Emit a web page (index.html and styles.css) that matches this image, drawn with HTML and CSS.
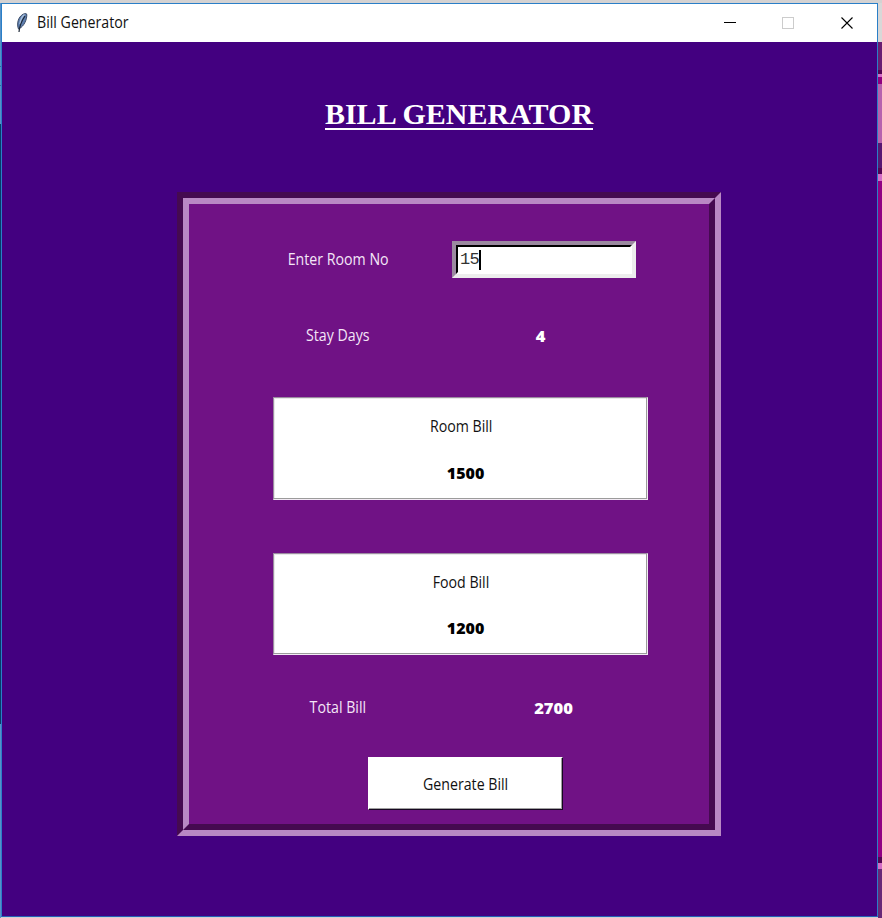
FILE: index.html
```html
<!DOCTYPE html>
<html lang="en">
<head>
<meta charset="utf-8">
<title>Bill Generator</title>
<link rel="stylesheet" href="styles.css">
</head>
<body>
<div class="desktop">
  <div class="edge-left"></div>
  <main class="window">
    <header class="titlebar">
      <svg class="feather" width="14" height="22" viewBox="0 0 14 22">
        <path d="M3.500 17C1.500 12 3 5 8 2.300C10 1.200 12 1.200 11.800 3C11.800 8 9 14 4.500 16.500Z" fill="#5f80b0" stroke="#3b4b66" stroke-width="1"/>
        <path d="M5 12C5.500 8 7 4.500 9.500 2.500" fill="none" stroke="#a9c0de" stroke-width="1.500"/>
        <path d="M4 20C4.500 14 6.500 9 10 4" fill="none" stroke="#1c2736" stroke-width="1.200"/>
      </svg>
      <span class="title"><span class="fit fit-title">Bill Generator</span></span>
      <svg class="controls" width="130" height="14" viewBox="0 0 130 14" fill="none" shape-rendering="crispEdges">
        <path d="M0 6.500H12" stroke="#000"/>
        <rect x="58.500" y="1.500" width="11" height="11" stroke="#ccc"/>
        <path d="M117.500 1.500L128.500 12.500M128.500 1.500L117.500 12.500" stroke="#000" stroke-width="1.100" shape-rendering="auto"/>
      </svg>
    </header>
    <h1 class="heading"><span>BILL GENERATOR</span></h1>
    <section class="groove">
      <div class="panel">
        <div class="row row-room">
          <label class="label"><span class="fit">Enter Room No</span></label>
          <div class="entry"><div class="entry-inner"><span class="digits">15</span><span class="caret"></span></div></div>
        </div>
        <div class="row row-days">
          <span class="label"><span class="fit">Stay Days</span></span>
          <strong class="value">4</strong>
        </div>
        <div class="box">
          <span class="box-name"><span class="fit">Room Bill</span></span>
          <strong class="box-value">1500</strong>
        </div>
        <div class="box box-food">
          <span class="box-name"><span class="fit">Food Bill</span></span>
          <strong class="box-value">1200</strong>
        </div>
        <div class="row row-total">
          <span class="label"><span class="fit">Total Bill</span></span>
          <strong class="value">2700</strong>
        </div>
        <button class="generate"><span class="fit">Generate Bill</span></button>
      </div>
    </section>
  </main>
  <div class="edge-right"></div>
</div>
</body>
</html>
```
FILE: styles.css
```css
* { box-sizing: border-box; }
body {
  margin: 0;
  background: #d4d2d2;
  font-family: "Open Sans", "Noto Sans", sans-serif;
  font-size: 15.5px;
  line-height: 20px;
}
.desktop {
  display: grid;
  grid-template-columns: 1px 877px 4px;
  width: 882px;
  height: 918px;
  padding-top: 3px;
  overflow: hidden;
}
.edge-left {
  background: linear-gradient(#5791c8 0 63px, #31679d 63px 64px, #5791c8 64px 82px, #31679d 82px 83px, #5791c8 83px 121px, #063a69 121px 721px, #5791c8 721px);
}
.edge-right {
  background: linear-gradient(#d8d8d8 0 39px, #691c73 39px 67px, #540454 67px 71px, #d36dc7 71px 74px, #91007f 74px 81px, #b661ae 81px 140px, #571773 140px 165px, #540454 165px 171px, #d36dc7 171px 178px, #910083 178px 854px, #540454 854px 860px, #d36dc7 860px 866px, #682777 866px);
}
.window {
  height: 914px;
  border: 1px solid #2a7fc8;
  border-bottom-color: #2460b8;
  background: #430080;
}
.titlebar {
  display: flex;
  align-items: center;
  height: 38px;
  padding: 0 23px 0 13px;
  background: #fff;
}
.feather { flex: none; margin-bottom: 1px; }
.title { flex: 1; margin: 0 0 2px 8px; color: #111; }
.fit { display: inline-block; white-space: nowrap; transform: scaleX(.915); }
.fit-title { transform-origin: left; }
.controls { flex: none; }
.heading {
  display: flex;
  justify-content: center;
  width: 268px;
  height: 36px;
  margin: 54px 0 0 323px;
  color: #fff;
  font: bold 30px/36px "Liberation Serif", serif;
  white-space: nowrap;
}
.heading span { border-bottom: 2px solid #fff; height: 34px; }
.groove {
  width: 544px;
  height: 644px;
  margin: 60px 0 0 175px;
  border: 6px solid;
  border-color: #450a50 #b988c4 #b988c4 #450a50;
}
.panel {
  height: 632px;
  border: 6px solid;
  border-color: #b988c4 #450a50 #450a50 #b988c4;
  background: #701285;
  padding-top: 37px;
}
.row { display: flex; align-items: center; color: #fff; }
.label { width: 170px; margin: 0 0 2px 64px; text-align: center; color: #f4e6f7; }
.row-room { height: 37px; }
.row-days { height: 20px; margin-top: 48px; }
.row-total { height: 20px; margin-top: 43px; }
.row-total .value { margin-left: 34px; }
.value { width: 193px; margin-left: 21px; text-align: center; font-weight: 800; font-size: 16.5px; }
.entry {
  width: 184px;
  height: 37px;
  margin-left: 29px;
  border: 4px solid;
  border-color: #9b8aa0 #ededed #ededed #9b8aa0;
}
.entry-inner {
  display: flex;
  align-items: center;
  height: 29px;
  border: 2px solid;
  border-color: #000 #fff #fff #000;
  background: #fff;
  color: #333;
  font: 17px/20px "Liberation Mono", monospace;
  padding-left: 2px;
}
.digits { letter-spacing: -.7px; }
.caret { width: 2px; height: 20px; background: #000; }
.box {
  display: flex;
  flex-direction: column;
  align-items: center;
  width: 375px;
  height: 103px;
  margin: 51px 0 0 84px;
  padding-top: 18px;
  border: 1px solid;
  border-color: #9b8ba0 #f2eaf4 #f2eaf4 #9b8ba0;
  background: #fff;
  box-shadow: inset -1px -1px #9b9b9b, inset 1px 1px #e8e8e8;
  color: #111;
}
.box-name { padding-left: 1px; }
.box-food { height: 102px; margin-top: 53px; }
.box-value { margin-top: 27px; color: #000; font-size: 16px; font-weight: 800; margin-left: 10px; }
.box-food .box-value { margin-top: 26px; }
.generate {
  display: block;
  width: 195px;
  height: 53px;
  margin: 39px 0 0 179px;
  padding: 0;
  border: 1px solid;
  border-color: #fff #160720 #160720 #fff;
  background: #fff;
  box-shadow: inset -1px -1px #a0a0a0;
  color: #111;
  font: 15.5px/20px "Open Sans", "Noto Sans", sans-serif;
}
```
